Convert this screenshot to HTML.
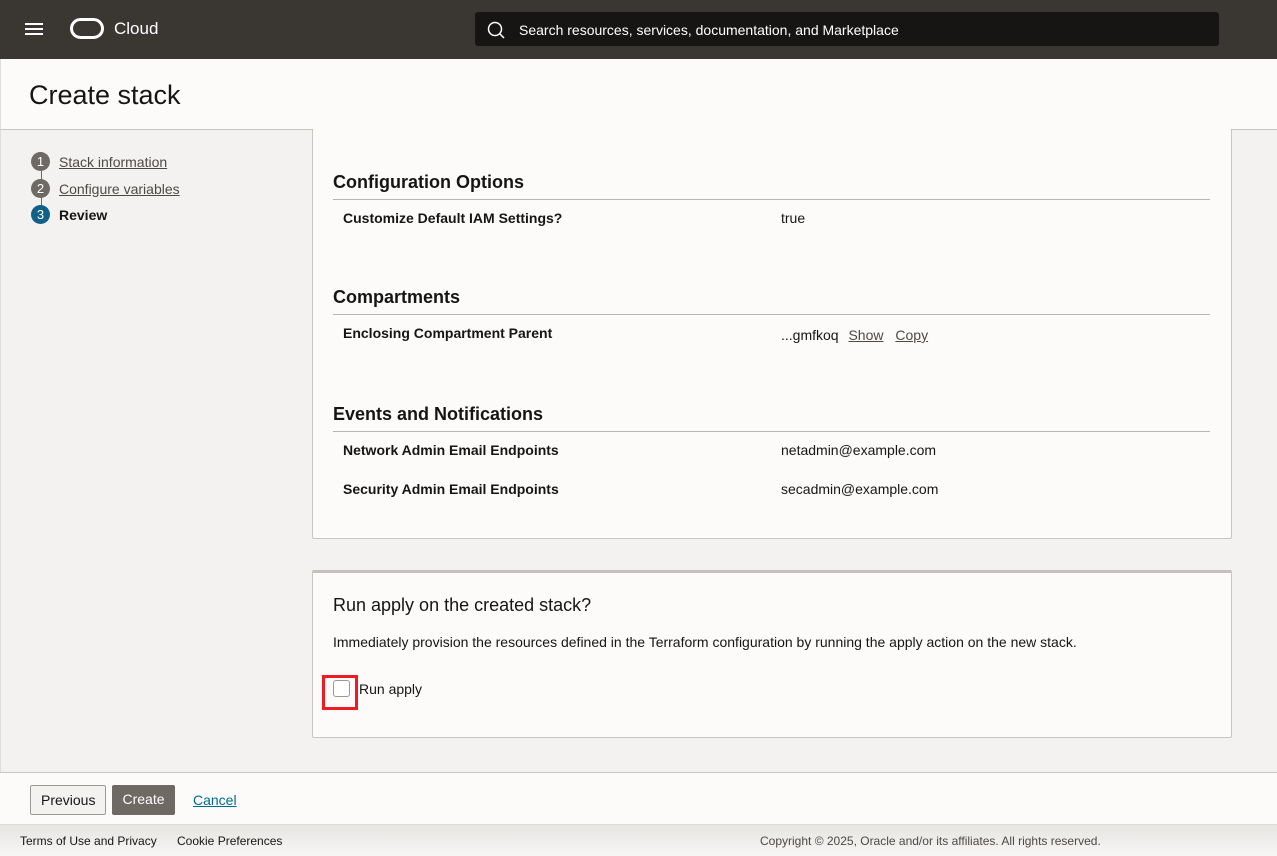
<!DOCTYPE html>
<html><head><style>
*{box-sizing:border-box;margin:0;padding:0}
body{width:1277px;height:856px;overflow:hidden;font-family:"Liberation Sans",sans-serif;background:#f3f2f1;color:#161513;position:relative}
.hdr{position:absolute;left:0;top:0;width:1277px;height:59px;background:#3a3632}
.title{position:absolute;top:59px;left:0;width:1277px;height:71px;background:#fcfbfa;border-bottom:1px solid #c9c6c2;border-left:1px solid #ddd}
.title h1{font-weight:400;font-size:27px;position:absolute;left:28px;top:21px}
.side{position:absolute;left:0;top:130px;width:312px;height:642px;border-left:1px solid #ddd}
.step{position:absolute;left:30px;font-size:14px;display:flex;align-items:center}
.step .n{width:19px;height:19px;border-radius:50%;background:#6f6964;color:#fff;font-size:13px;text-align:center;line-height:19px;margin-right:9px}
.step a{color:#4d4945;text-decoration:underline}
.card{position:absolute;left:312px;width:920px;background:#fcfbfa;border:1px solid #c9c6c2;border-radius:2px}
h2{position:absolute;left:20px;font-size:18px;font-weight:700;width:877px;border-bottom:1px solid #b9b6b2;padding-bottom:6px}
.k{position:absolute;left:30px;font-size:14px;font-weight:700}
.v{position:absolute;left:468px;font-size:14px}
.v a{color:#4d4945;margin-left:8px}
.foot{position:absolute;left:0;top:772px;width:1277px;height:52px;background:#fcfbfa;border-top:1px solid #c9c6c2}
.btn{position:absolute;top:12px;height:30px;font-size:14px;line-height:28px;padding:0 10px;border-radius:2px}
.bot{position:absolute;left:0;top:824px;width:1277px;height:32px;background:linear-gradient(#e7e5e2,#f7f6f5);border-top:1px solid #ddd;font-size:12px}
</style></head><body>
<div class="hdr">
<svg style="position:absolute;left:25px;top:22px" width="18" height="15"><rect y="1" width="18" height="2" fill="#fff"/><rect y="6" width="18" height="2" fill="#fff"/><rect y="11" width="18" height="2" fill="#fff"/></svg>
<div style="position:absolute;left:70px;top:18px;width:34px;height:21px;border:3.5px solid #fff;border-radius:11px"></div>
<div style="position:absolute;left:114px;top:19px;color:#fff;font-size:17px">Cloud</div>
<div style="position:absolute;left:475px;top:12px;width:744px;height:34px;background:#161513;border-radius:3px">
<svg style="position:absolute;left:12px;top:9px" width="18" height="18"><circle cx="8" cy="8" r="6.5" stroke="#fff" stroke-width="1.5" fill="none"/><path d="M12.5 12.5L17 17" stroke="#fff" stroke-width="1.5"/></svg>
<div style="position:absolute;left:44px;top:10px;color:#fff;font-size:14px">Search resources, services, documentation, and Marketplace</div></div>
</div>
<div class="title"><h1>Create stack</h1></div>
<div class="side">
<div style="position:absolute;left:40px;top:22px;width:1px;height:60px;background:#6f6964"></div>
<div class="step" style="top:22px"><span class="n">1</span><a>Stack information</a></div>
<div class="step" style="top:49px"><span class="n">2</span><a>Configure variables</a></div>
<div class="step" style="top:75px"><span class="n" style="background:#116088">3</span><b>Review</b></div>
</div>
<div class="card" style="top:129px;height:410px;border-top:none">
<h2 style="top:43px">Configuration Options</h2>
<div class="k" style="top:81px">Customize Default IAM Settings?</div><div class="v" style="top:81px">true</div>
<h2 style="top:158px">Compartments</h2>
<div class="k" style="top:196px">Enclosing Compartment Parent</div><div class="v" style="top:198px">...gmfkoq <a style="margin-left:6px;text-decoration:underline">Show</a> <a style="text-decoration:underline">Copy</a></div>
<h2 style="top:275px">Events and Notifications</h2>
<div class="k" style="top:313px">Network Admin Email Endpoints</div><div class="v" style="top:313px">netadmin@example.com</div>
<div class="k" style="top:352px">Security Admin Email Endpoints</div><div class="v" style="top:352px">secadmin@example.com</div>
</div>
<div class="card" style="top:570px;height:168px;border-top:3px solid #c4c0bb">
<div style="position:absolute;left:20px;top:22px;font-size:18px">Run apply on the created stack?</div>
<div style="position:absolute;left:20px;top:61px;font-size:14px">Immediately provision the resources defined in the Terraform configuration by running the apply action on the new stack.</div>
<div style="position:absolute;left:9px;top:102px;width:36px;height:35px;border:3px solid #ee1b24"></div>
<div style="position:absolute;left:20px;top:107px;width:17px;height:17px;border:1px solid #9e9892;border-radius:3px;background:#fff"></div>
<div style="position:absolute;left:46px;top:108px;font-size:14px">Run apply</div>
</div>
<div class="foot">
<div class="btn" style="left:30px;border:1px solid #9e9892;background:#f3f2f1">Previous</div>
<div class="btn" style="left:112px;background:#6f6964;color:#fff;width:63px;text-align:center">Create</div>
<div style="position:absolute;left:193px;top:19px;font-size:14px;color:#006b8f;text-decoration:underline">Cancel</div>
</div>
<div class="bot">
<span style="position:absolute;left:20px;top:9px">Terms of Use and Privacy</span>
<span style="position:absolute;left:177px;top:9px">Cookie Preferences</span>
<span style="position:absolute;left:760px;top:9px;color:#4d4945">Copyright © 2025, Oracle and/or its affiliates. All rights reserved.</span>
</div>
</body></html>
